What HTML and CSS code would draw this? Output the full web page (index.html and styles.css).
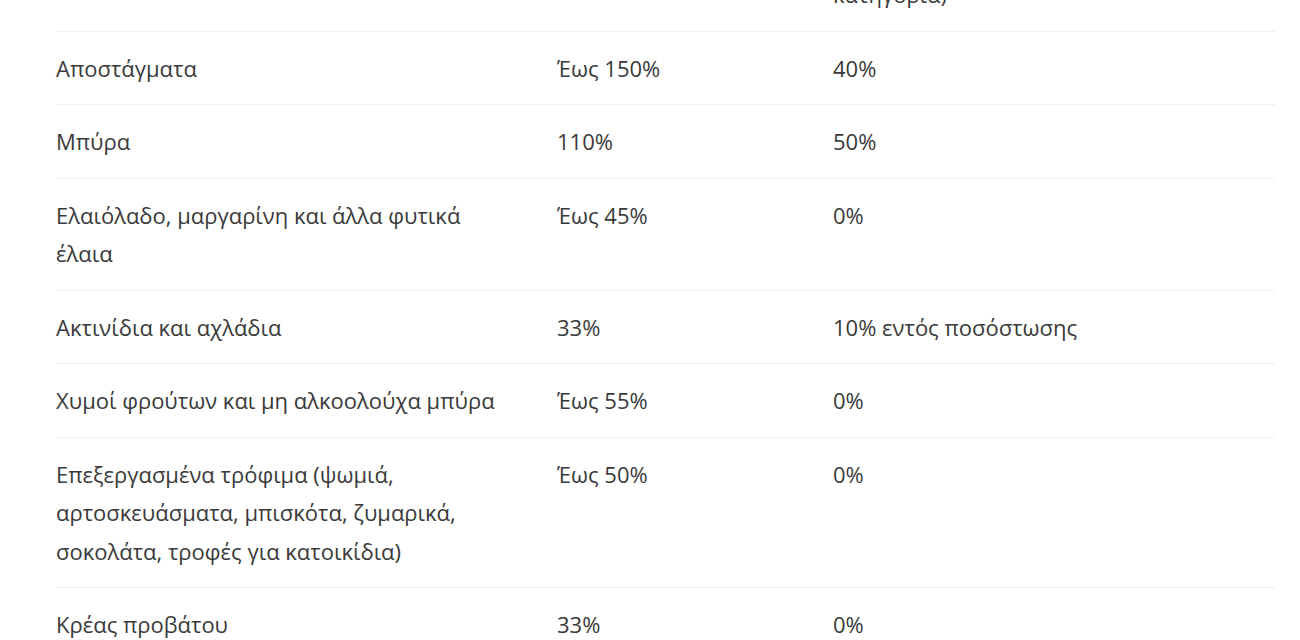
FILE: index.html
```html
<!DOCTYPE html>
<html lang="el">
<head>
<meta charset="utf-8">
<title>Δασμοί</title>
<link rel="stylesheet" href="styles.css">
</head>
<body>
<div class="wrap">
<table class="tariffs">
<thead>
<tr>
<th class="c1">Προϊόν</th>
<th class="c2">Δασμός ΗΠΑ</th>
<th class="c3">Δασμός ΕΕ σε<br>αμερικανικά προϊόντα (ανά<br>κατηγορία)</th>
</tr>
</thead>
<tbody>
<tr><td class="c1">Αποστάγματα</td><td class="c2">Έως 150%</td><td class="c3">40%</td></tr>
<tr><td class="c1">Μπύρα</td><td class="c2">110%</td><td class="c3">50%</td></tr>
<tr><td class="c1">Ελαιόλαδο, μαργαρίνη και άλλα φυτικά έλαια</td><td class="c2">Έως 45%</td><td class="c3">0%</td></tr>
<tr><td class="c1">Ακτινίδια και αχλάδια</td><td class="c2">33%</td><td class="c3">10% εντός ποσόστωσης</td></tr>
<tr><td class="c1">Χυμοί φρούτων και μη αλκοολούχα μπύρα</td><td class="c2">Έως 55%</td><td class="c3">0%</td></tr>
<tr><td class="c1">Επεξεργασμένα τρόφιμα (ψωμιά, αρτοσκευάσματα, μπισκότα, ζυμαρικά, σοκολάτα, τροφές για κατοικίδια)</td><td class="c2">Έως 50%</td><td class="c3">0%</td></tr>
<tr><td class="c1">Κρέας προβάτου</td><td class="c2">33%</td><td class="c3">0%</td></tr>
</tbody>
</table>
</div>
</body>
</html>
```
FILE: styles.css
```css
html, body {
  margin: 0;
  padding: 0;
  background: #ffffff;
}
body {
  font-family: "Open Sans", "Noto Sans", "DejaVu Sans", sans-serif;
  color: #3a3a3a;
  overflow: hidden;
}
.wrap {
  padding-left: 56px;
  margin-top: -119px;
}
.tariffs {
  width: 1219px;
  border-collapse: collapse;
  table-layout: fixed;
  font-size: 22px;
  line-height: 38.5px;
}
.tariffs th,
.tariffs td {
  text-align: left;
  vertical-align: top;
  font-weight: normal;
  padding: 17px 20px 17px 0;
  border-bottom: 1.5px solid #efefef;
}
.tariffs tr:last-child td {
  border-bottom: none;
}
.tariffs .c1 {
  width: 454px;
  padding-right: 47px;
}
.c2 { width: 256px; }
.c3 { width: auto; }
```
